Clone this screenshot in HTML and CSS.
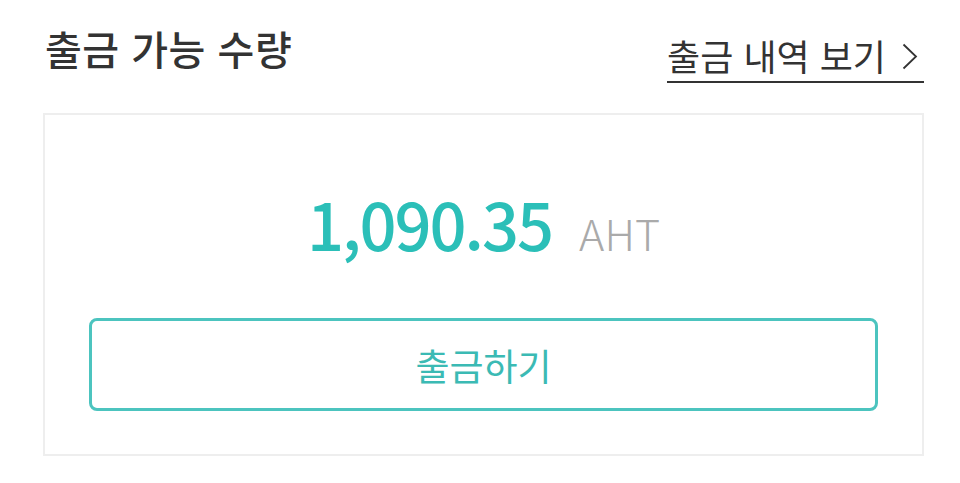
FILE: index.html
```html
<!DOCTYPE html>
<html lang="ko">
  <head>
    <meta charset="UTF-8" />
    <meta name="viewport" content="width=device-width, initial-scale=1.0" />
    <title>출금 가능 수량</title>
    <link rel="stylesheet" href="styles.css">
  </head>
  <body>
    <div class="page">
      <div class="header">
        <h1 class="title">출금 가능 수량</h1>
        <a class="history" href="#">
          <span>출금 내역 보기</span>
          <svg class="arrow" width="16" height="27" viewBox="0 0 16 27">
            <polyline points="1.5,1.5 14,13.5 1.5,25.5" fill="none" stroke="#333333" stroke-width="1.8" />
          </svg>
        </a>
      </div>

      <div class="card">
        <div class="amount">
          <span class="value">1,090.35</span>
          <span class="unit">AHT</span>
        </div>
        <button type="button" class="withdraw">출금하기</button>
      </div>
    </div>
  </body>
</html>
```

FILE: styles.css
```css
* {
  margin: 0px;
  padding: 0px;
  box-sizing: border-box;
}
body {
  background-color: #ffffff;
  font-family: "Noto Sans CJK KR", "Noto Sans", sans-serif;
  color: #333333;
}

.page {
  padding: 22px 36px 0 43px;
}

.header {
  display: flex;
  justify-content: space-between;
  align-items: flex-end;
  padding-left: 2px;
  height: 60px;
}

.title {
  font-size: 40px;
  font-weight: 500;
  line-height: 56px;
  color: #333333;
  letter-spacing: 0.5px;
  margin-bottom: 6px;
}

.history {
  display: flex;
  align-items: center;
  gap: 16px;
  font-size: 36px;
  font-weight: 400;
  color: #333333;
  text-decoration: none;
  line-height: 52px;
  border-bottom: 2px solid #333333;
  padding: 0 6px 0 0;
  margin-bottom: -1px;
}

.arrow {
  margin-top: 2px;
}

.card {
  margin-top: 31px;
  border: 2px solid #eeeeee;
  padding: 70px 44px 43px 44px;
}

.amount {
  display: flex;
  justify-content: center;
  align-items: baseline;
  gap: 27px;
  height: 80px;
  margin-bottom: 53px;
  line-height: 80px;
}

.value {
  font-size: 65px;
  font-weight: 500;
  color: #2bbfb8;
  letter-spacing: -2px;
  margin-top: -2px;
}

.unit {
  font-size: 43px;
  font-weight: 300;
  color: #aaaaaa;
}

.withdraw {
  display: block;
  width: 100%;
  height: 93px;
  background-color: #ffffff;
  border: 3px solid #4cc4bf;
  border-radius: 8px;
  font-family: "Noto Sans CJK KR", sans-serif;
  font-size: 37px;
  color: #3bbab4;
  cursor: pointer;
}
```
